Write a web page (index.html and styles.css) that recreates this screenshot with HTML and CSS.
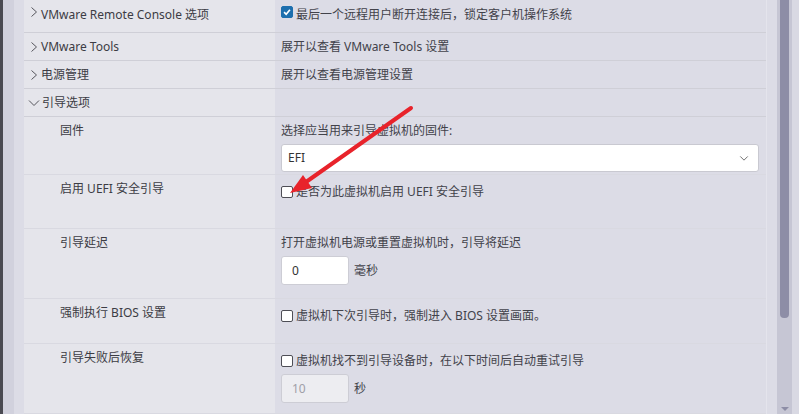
FILE: index.html
```html
<!DOCTYPE html>
<html lang="zh-CN">
<head>
    <meta charset="UTF-8">
    <title>虚拟机选项</title>
    <link rel="stylesheet" href="styles.css">
</head>
<body>
    <div class="edge"></div>
    <div class="gutter"></div>
    <div class="gutter2"></div>

    <div class="table">
        <div class="row section first">
            <div class="label"><svg class="chev" viewBox="0 0 8 12"><polyline points="1.5,1.5 6.5,6 1.5,10.5"/></svg>VMware Remote Console 选项</div>
            <div class="value"><span class="check on"><svg viewBox="0 0 12 12"><polyline points="2.5,6.2 5,8.7 9.5,3.3"/></svg></span>最后一个远程用户断开连接后，锁定客户机操作系统</div>
        </div>
        <div class="row section">
            <div class="label"><svg class="chev" viewBox="0 0 8 12"><polyline points="1.5,1.5 6.5,6 1.5,10.5"/></svg>VMware Tools</div>
            <div class="value">展开以查看 VMware Tools 设置</div>
        </div>
        <div class="row section">
            <div class="label"><svg class="chev" viewBox="0 0 8 12"><polyline points="1.5,1.5 6.5,6 1.5,10.5"/></svg>电源管理</div>
            <div class="value">展开以查看电源管理设置</div>
        </div>
        <div class="row section">
            <div class="label open"><svg class="chev down" viewBox="0 0 12 8"><polyline points="1,1.5 6,6.5 11,1.5"/></svg>引导选项</div>
            <div class="value"></div>
        </div>

        <div class="row sub fw">
            <div class="label">固件</div>
            <div class="value">
                <div>选择应当用来引导虚拟机的固件:</div>
                <div class="select">EFI<svg viewBox="0 0 12 8"><polyline points="1.5,1.5 6,6 10.5,1.5"/></svg></div>
            </div>
        </div>
        <div class="row sub uefi">
            <div class="label">启用 UEFI 安全引导</div>
            <div class="value boxed"><span class="check"></span>是否为此虚拟机启用 UEFI 安全引导</div>
        </div>
        <div class="row sub delay">
            <div class="label">引导延迟</div>
            <div class="value">
                <div>打开虚拟机电源或重置虚拟机时，引导将延迟</div>
                <div class="unit"><span class="field">0</span>毫秒</div>
            </div>
        </div>
        <div class="row sub bios">
            <div class="label">强制执行 BIOS 设置</div>
            <div class="value boxed"><span class="check"></span>虚拟机下次引导时，强制进入 BIOS 设置画面。</div>
        </div>
        <div class="row sub retry">
            <div class="label">引导失败后恢复</div>
            <div class="value">
                <div class="boxed-line"><span class="check"></span>虚拟机找不到引导设备时，在以下时间后自动重试引导</div>
                <div class="unit"><span class="field off">10</span>秒</div>
            </div>
        </div>
    </div>

    <div class="gap"></div>
    <div class="scroll">
        <div class="thumb"></div>
        <div class="arrow"></div>
    </div>
    <div class="gap2"></div>

    <!-- red annotation arrow -->
    <svg class="pointer" width="799" height="414" viewBox="0 0 799 414">
        <line x1="411" y1="108" x2="306" y2="182"/>
        <polygon points="290,193 312,188 303,175"/>
    </svg>
</body>
</html>
```

FILE: styles.css
```css
body {
    margin: 0;
    height: 414px;
    overflow: hidden;
    display: flex;
    font-family: "Noto Sans", "Noto Sans CJK SC", sans-serif;
    font-size: 12px;
    line-height: 18px;
    color: #3c3c44;
    background-color: #dcdce6;
    position: relative;
}
.edge {
    width: 3px;
    background-color: #4a4a52;
}
.gutter {
    width: 11px;
    background-color: #d1d1dd;
}
.gutter2 {
    width: 10px;
    background-color: #dcdce6;
}
.table {
    width: 742px;
    display: flex;
    flex-direction: column;
    border-right: 1px solid #e4e4ec;
}
.row {
    display: flex;
    border-bottom: 1px solid #cfcfd7;
}
.row.sub {
    border-bottom-color: #d9d9e1;
}
.label {
    width: 251px;
    flex-shrink: 0;
    background-color: #e5e5eb;
    display: flex;
    align-items: center;
    padding-left: 6px;
    box-sizing: border-box;
}
.value {
    flex-grow: 1;
    padding: 0 7px 0 6px;
    display: flex;
    align-items: center;
    color: #42424a;
}
.section {
    height: 28px;
    box-sizing: border-box;
}
.section.first {
    height: 33px;
}
.section.first .label,
.section.first .value {
    align-items: flex-start;
    padding-top: 6px;
}
.chev {
    width: 8px;
    height: 12px;
    margin-right: 3px;
    fill: none;
    stroke: #55555c;
    stroke-width: 1;
}
.chev.down {
    width: 12px;
    height: 8px;
    margin-left: -2px;
    margin-right: 2px;
}
.sub .label {
    align-items: flex-start;
    padding: 5px 0 0 36px;
}
.sub .value {
    flex-direction: column;
    align-items: stretch;
    padding-top: 5px;
}
.fw { height: 57px; }
.uefi { height: 53px; }
.delay { height: 69px; }
.bios { height: 44px; }
.retry { flex-grow: 1; }
.value.boxed {
    flex-direction: row;
    align-items: flex-start;
    padding-top: 8px;
}
.boxed-line {
    display: flex;
    align-items: center;
    padding-top: 3px;
}
.check {
    width: 12px;
    height: 12px;
    box-sizing: border-box;
    border: 1px solid #4e4e56;
    border-radius: 2px;
    background-color: #fff;
    margin: 3px 3px 0 0;
    flex-shrink: 0;
}
.boxed-line .check {
    margin-top: 0;
}
.section .check {
    margin-top: 0;
}
.check.on {
    background-color: #1d6fae;
    border-color: #1d6fae;
    display: flex;
}
.check.on svg {
    width: 10px;
    height: 10px;
    fill: none;
    stroke: #fff;
    stroke-width: 2;
}
.select {
    margin-top: 4px;
    height: 28px;
    box-sizing: border-box;
    background-color: #fff;
    border: 1px solid #c9c9d1;
    border-radius: 3px;
    display: flex;
    align-items: center;
    justify-content: space-between;
    padding: 0 9px 0 6px;
    color: #333;
}
.select svg {
    width: 10px;
    height: 7px;
    fill: none;
    stroke: #555;
    stroke-width: 1;
}
.unit {
    display: flex;
    align-items: center;
    margin-top: 4px;
}
.field {
    width: 68px;
    height: 29px;
    box-sizing: border-box;
    background-color: #fff;
    border: 1px solid #cdcdd5;
    border-radius: 3px;
    display: flex;
    align-items: center;
    padding-left: 10px;
    margin-right: 5px;
    color: #333;
}
.field.off {
    background-color: #ededf1;
    color: #a0a0a8;
}
.gap {
    width: 10px;
}
.scroll {
    width: 15px;
    background-color: #c6c6d4;
    position: relative;
}
.thumb {
    margin-left: 3px;
    width: 9px;
    height: 318px;
    background-color: #8d8da6;
    border-radius: 0 0 4px 4px;
}
.arrow {
    position: absolute;
    left: 4px;
    bottom: 3px;
    border-left: 4px solid transparent;
    border-right: 4px solid transparent;
    border-top: 4px solid #8d8da6;
}
.gap2 {
    width: 7px;
    background-color: #d9d9e3;
}
.pointer {
    position: absolute;
    left: 0;
    top: 0;
    pointer-events: none;
}
.pointer line {
    stroke: #e8232b;
    stroke-width: 4;
    stroke-linecap: round;
}
.pointer polygon {
    fill: #e8232b;
}
```
